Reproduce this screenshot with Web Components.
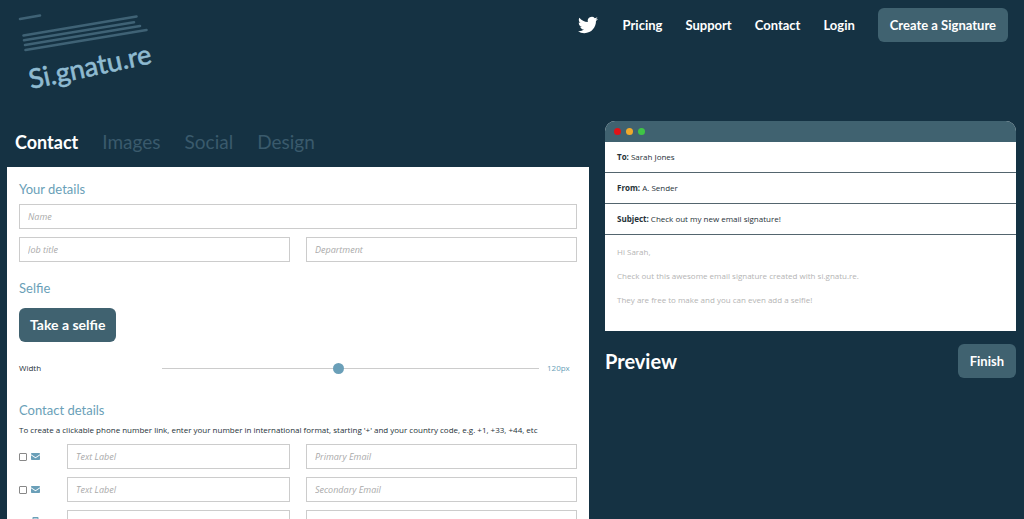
<!DOCTYPE html>
<html lang="en">
<head>
<meta charset="utf-8">
<meta name="viewport" content="width=device-width, initial-scale=1">
<title>Si.gnatu.re</title>
<style>
  html { scrollbar-width: none; }
  body {
    margin: 0;
    background: #153243;
    color: #263238;
    font: 8px/12px "Open Sans", sans-serif;
    --teal: #406270;
    --blue: #6a9fb8;
    --muted: #3a5a6c;
    --line: #cccccc;
    --hand: Lato, sans-serif;
  }
</style>
</head>
<body>
<signature-app></signature-app>
<script>
const define = (name, html, setup) => {
  const template = document.createElement('template');
  template.innerHTML = html;
  customElements.define(name, class extends HTMLElement {
    connectedCallback() {
      if (this.shadowRoot) return;
      this.attachShadow({ mode: 'open' }).append(template.content.cloneNode(true));
      if (setup) setup(this, this.shadowRoot);
    }
  });
};

define('brand-logo', `
  <style>
    :host { display: block; width: 160px; }
    a, svg { display: block; }
    text { font: 27px var(--hand); fill: #8fbbd1; stroke: #8fbbd1; stroke-width: .6; }
  </style>
  <a href="#" aria-label="Si.gnatu.re home">
    <svg width="160" height="100" viewBox="0 0 160 100">
      <g stroke="#3f6275" stroke-width="2.6" stroke-linecap="round">
        <path d="M20 19 40 15.500M23.500 35.500 136.500 16.500M24 40.200 134 22.300M25 45 140 26M25.500 50 146.500 30"/>
      </g>
      <text x="31" y="89" transform="rotate(-12 31 89)">Si.gnatu.re</text>
    </svg>
  </a>`);

define('nav-link', `
  <style>
    :host { display: block; }
    a { display: block; color: #fff; text-decoration: none; font: bold 13px/16px var(--hand); }
  </style>
  <a href="#"><slot></slot></a>`);

define('action-button', `
  <style>
    :host { display: block; }
    button {
      display: block; height: 34px; padding: 0 12px; border: 0; border-radius: 6px;
      background: var(--teal); color: #fff; font: bold 13px/16px var(--hand); white-space: nowrap;
    }
    :host([size=large]) button { padding: 0 11px; font-size: 14px; }
  </style>
  <button type="button"><slot></slot></button>`);

define('twitter-link', `
  <style>
    :host { display: block; padding-right: 2px; }
    a, svg { display: block; }
  </style>
  <a href="#" aria-label="Twitter">
    <svg width="20" height="20" viewBox="0 0 24 24" fill="#fff"><path d="M23.953 4.57a10 10 0 01-2.825.775 4.958 4.958 0 002.163-2.723c-.951.555-2.005.959-3.127 1.184a4.92 4.92 0 00-8.384 4.482C7.69 8.095 4.067 6.13 1.64 3.162a4.822 4.822 0 00-.666 2.475c0 1.71.87 3.213 2.188 4.096a4.904 4.904 0 01-2.228-.616v.06a4.923 4.923 0 003.946 4.827 4.996 4.996 0 01-2.212.085 4.936 4.936 0 004.604 3.417 9.867 9.867 0 01-6.102 2.105c-.39 0-.779-.023-1.17-.067a13.995 13.995 0 007.557 2.209c9.053 0 13.998-7.496 13.998-13.985 0-.21 0-.42-.015-.63A9.935 9.935 0 0024 4.59z"/></svg>
  </a>`);

define('site-header', `
  <style>
    :host { display: flex; justify-content: space-between; align-items: flex-start; height: 117px; }
    nav { display: flex; align-items: center; gap: 23px; padding: 8px 8px 0 0; }
  </style>
  <brand-logo></brand-logo>
  <nav aria-label="Main">
    <twitter-link></twitter-link>
    <nav-link>Pricing</nav-link>
    <nav-link>Support</nav-link>
    <nav-link>Contact</nav-link>
    <nav-link>Login</nav-link>
    <action-button>Create a Signature</action-button>
  </nav>`);

define('editor-tabs', `
  <style>
    :host { display: flex; align-items: center; gap: 24px; height: 50px; padding-left: 8px; }
    button { padding: 0; border: 0; background: none; color: var(--muted); font: 19px/24px var(--hand); }
    button[aria-selected=true] { color: #fff; font-size: 18px; font-weight: bold; }
  </style>
  <button type="button" role="tab" aria-selected="true">Contact</button>
  <button type="button" role="tab" aria-selected="false">Images</button>
  <button type="button" role="tab" aria-selected="false">Social</button>
  <button type="button" role="tab" aria-selected="false">Design</button>`);

define('section-title', `
  <style>
    :host { display: block; }
    h2 { margin: 0; color: var(--blue); font: 13px/16px var(--hand); }
  </style>
  <h2><slot></slot></h2>`);

define('text-field', `
  <style>
    :host { display: block; min-width: 0; }
    input {
      display: block; box-sizing: border-box; width: 100%; height: 25px; padding: 0 8px;
      border: 1px solid var(--line); border-radius: 0; background: #fff; color: #263238; font: inherit; font-size: 9px;
    }
    input::placeholder { color: #aaa; font-style: italic; opacity: 1; }
  </style>
  <input type="text">`, (host, root) => {
    const input = root.querySelector('input');
    input.placeholder = host.getAttribute('hint') || '';
    input.setAttribute('aria-label', input.placeholder);
  });

define('width-slider', `
  <style>
    :host { display: grid; grid-template-columns: 143px 1fr 38px; align-items: center; height: 12px; }
    input { appearance: none; width: 100%; height: 12px; margin: 0; background: linear-gradient(#ccc, #ccc) center / 100% 1px no-repeat; }
    input::-webkit-slider-thumb { appearance: none; width: 11px; height: 11px; border-radius: 50%; background: var(--blue); }
    output { padding-left: 8px; color: var(--blue); }
  </style>
  <label for="w">Width</label>
  <input id="w" type="range" min="50" max="200" value="120">
  <output for="w">120px</output>`);

define('contact-row', `
  <style>
    :host { display: grid; grid-template-columns: 48px 223fr 287fr; }
    label { display: flex; align-items: center; gap: 4px; }
    input { appearance: none; box-sizing: border-box; width: 8px; height: 8px; margin: 0; border: 1px solid #888; border-radius: 1px; background: #fff; }
    svg { display: block; fill: var(--blue); }
    .second { margin-left: 16px; }
    .phone { display: none; }
    :host([kind=phone]) .mail { display: none; }
    :host([kind=phone]) .phone { display: block; }
  </style>
  <label>
    <input type="checkbox">
    <svg class="mail" width="9" height="7" viewBox="0 0 9 7"><path d="M0 .8Q0 0 .8 0H8.200Q9 0 9 .8V1.300L4.500 4.300 0 1.300ZM0 2.300 4.500 5.200 9 2.300V6.200Q9 7 8.200 7H.8Q0 7 0 6.200Z"/></svg>
    <svg class="phone" width="9" height="12" viewBox="0 0 9 12"><path d="M2.300 0H6.700Q7.500 0 7.500 .8V11.200Q7.500 12 6.700 12H2.300Q1.500 12 1.500 11.200V.8Q1.500 0 2.300 0ZM2.500 1.500V9.500H6.500V1.500Z" fill-rule="evenodd"/></svg>
  </label>
  <text-field class="first"></text-field>
  <text-field class="second"></text-field>`, (host, root) => {
    const value = host.getAttribute('value');
    root.querySelector('input').setAttribute('aria-label', 'Show ' + value);
    const second = root.querySelector('.second').shadowRoot.querySelector('input');
    const first = root.querySelector('.first').shadowRoot.querySelector('input');
    first.placeholder = 'Text Label';
    first.setAttribute('aria-label', 'Text label for ' + value);
    second.placeholder = value;
    second.setAttribute('aria-label', value);
  });

define('details-form', `
  <style>
    :host { display: block; padding: 14px 12px 12px; background: #fff; }
    form { display: flex; flex-direction: column; }
    .fields { display: grid; grid-template-columns: 1fr 1fr; gap: 8px 16px; margin: 7px 0 18px; }
    .wide { grid-column: 1 / -1; }
    .selfie { align-self: flex-start; margin: 12px 0 20px; }
    width-slider { margin-bottom: 28px; }
    p { margin: 6px 0 8px; }
    contact-row { margin-bottom: 8px; }
  </style>
  <form>
    <section-title>Your details</section-title>
    <div class="fields">
      <text-field class="wide" hint="Name"></text-field>
      <text-field hint="Job title"></text-field>
      <text-field hint="Department"></text-field>
    </div>
    <section-title>Selfie</section-title>
    <action-button class="selfie" size="large">Take a selfie</action-button>
    <width-slider></width-slider>
    <section-title>Contact details</section-title>
    <p>To create a clickable phone number link, enter your number in international format, starting '+' and your country code, e.g. +1, +33, +44, etc</p>
    <contact-row value="Primary Email"></contact-row>
    <contact-row value="Secondary Email"></contact-row>
    <contact-row kind="phone" value="Phone"></contact-row>
  </form>`);

define('mail-line', `
  <style>
    :host { display: block; padding: 9px 12px; border-bottom: 1px solid #53656e; }
  </style>
  <slot></slot>`);

define('mail-window', `
  <style>
    :host { display: block; background: #fff; border-radius: 10px 10px 0 0; overflow: hidden; }
    .bar { display: flex; align-items: center; gap: 5px; height: 21px; padding-left: 9px; background: var(--teal); }
    i { width: 7px; height: 7px; border-radius: 50%; background: #e01217; }
    i:nth-child(2) { background: #f0a92c; }
    i:nth-child(3) { background: #3fc446; }
    .body { display: grid; gap: 12px; padding: 11px 12px 25px; color: #b4b4b4; }
    p { margin: 0; }
  </style>
  <div class="bar"><i></i><i></i><i></i></div>
  <mail-line><b>To:</b> Sarah Jones</mail-line>
  <mail-line><b>From:</b> A. Sender</mail-line>
  <mail-line><b>Subject:</b> Check out my new email signature!</mail-line>
  <div class="body">
    <p>Hi Sarah,</p>
    <p>Check out this awesome email signature created with si.gnatu.re.</p>
    <p>They are free to make and you can even add a selfie!</p>
  </div>`);

define('preview-pane', `
  <style>
    :host { display: block; padding-top: 4px; }
    .foot { display: flex; align-items: center; justify-content: space-between; margin-top: 13px; }
    h1 { margin: 0; color: #fff; font: bold 20px/24px var(--hand); }
  </style>
  <mail-window></mail-window>
  <div class="foot"><h1>Preview</h1><action-button>Finish</action-button></div>`);

define('signature-app', `
  <style>
    :host { display: block; padding: 0 8px 0 7px; }
    site-header { margin-left: -7px; }
    main { display: grid; grid-template-columns: 582fr 411fr; gap: 16px; align-items: start; }
  </style>
  <site-header></site-header>
  <main>
    <section aria-label="Editor">
      <editor-tabs role="tablist"></editor-tabs>
      <details-form></details-form>
    </section>
    <preview-pane></preview-pane>
  </main>`);
</script>
</body>
</html>
